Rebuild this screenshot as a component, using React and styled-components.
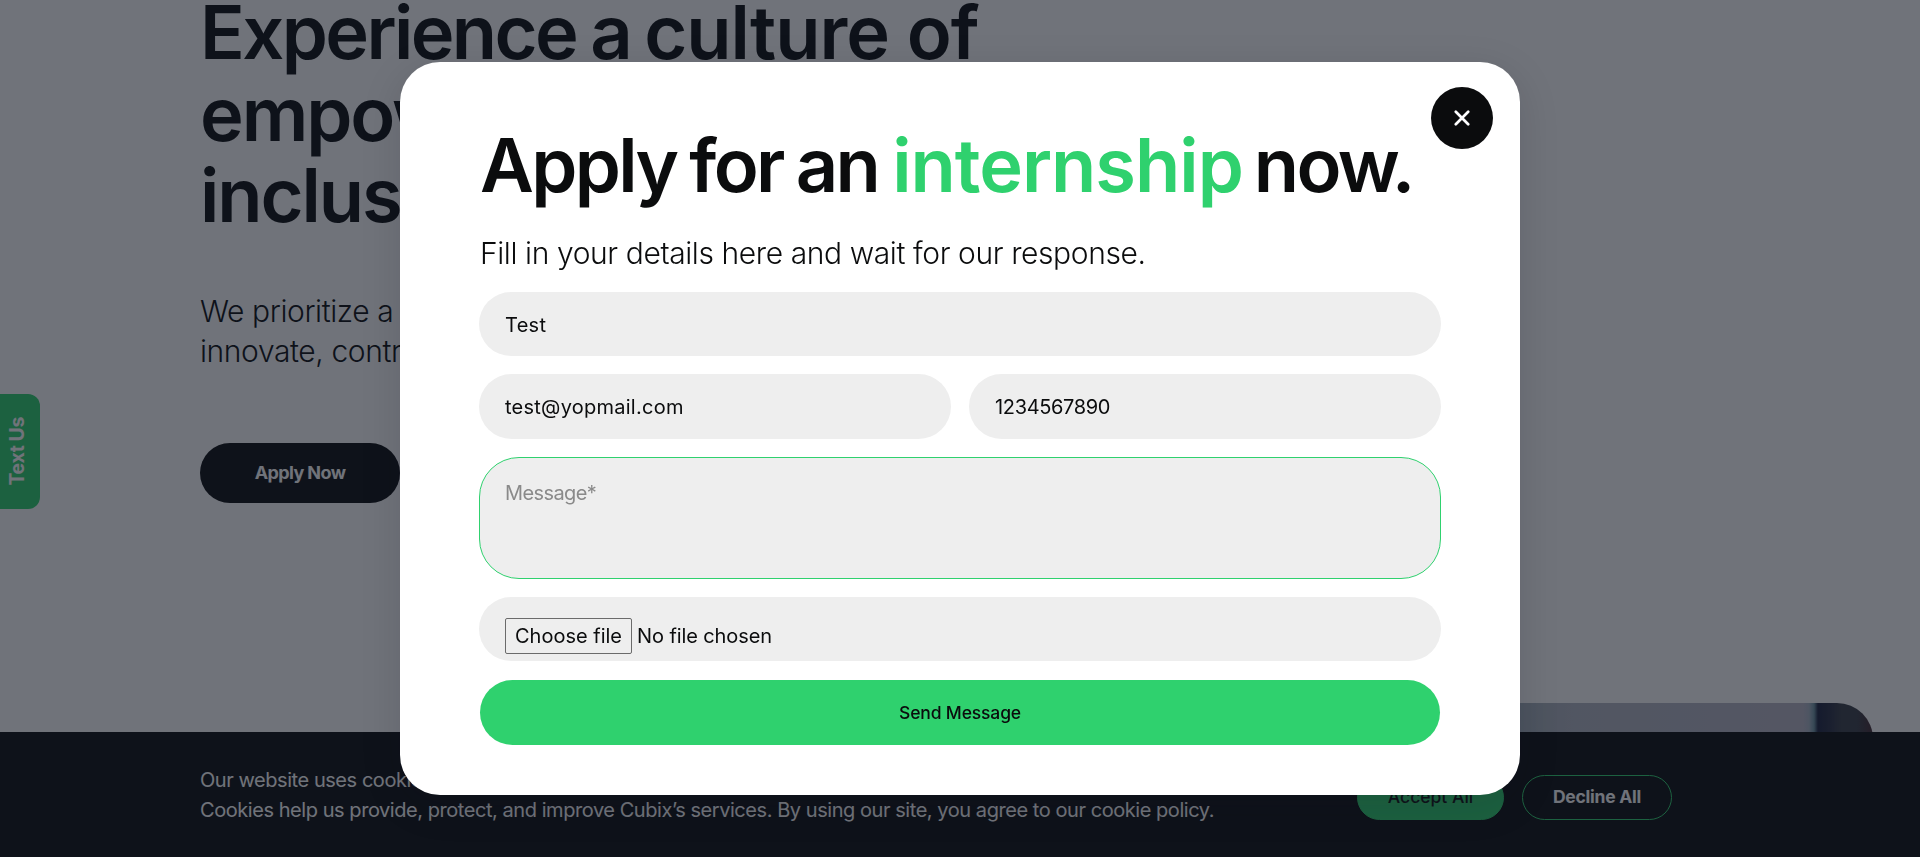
import React from "react";
import styled, { createGlobalStyle } from "styled-components";

const Global = createGlobalStyle`
  * { box-sizing: border-box; }
  body { margin: 0; background: #fff; font-family: Inter, "Liberation Sans", sans-serif; overflow: hidden; }
  h1, h2, p { margin: 0; font-weight: inherit; }
`;

const Text = styled.span`
  letter-spacing: ${(p) => p.$ls || 0}px;
  word-spacing: ${(p) => (p.$ws === undefined ? "inherit" : `${p.$ws}px`)};
`;

const Page = styled.div`
  height: 857px;
  display: flex;
  flex-direction: column;
  overflow: hidden;
  white-space: nowrap;
`;

const Hero = styled.main`
  height: 732px;
  flex: none;
  display: flex;
  flex-direction: column;
  align-items: flex-start;
  padding-left: 200px;
  overflow: hidden;
`;

const HeroTitle = styled.h1`
  flex: none;
  margin-top: -8px;
  font-size: 74px;
  font-weight: 600;
  line-height: 81.5px;
  color: #0c0e10;
`;

const HeroText = styled.p`
  flex: none;
  margin-top: 54px;
  font-size: 30px;
  font-weight: 300;
  line-height: 40px;
  color: #0c0e10;
`;

const ApplyButton = styled.div`
  flex: none;
  margin-top: 72px;
  width: 200px;
  height: 60px;
  border-radius: 30px;
  background: #0c0e10;
  color: #fff;
  display: flex;
  align-items: center;
  justify-content: center;
  font-size: 18px;
  font-weight: 700;
`;

const Photo = styled.div`
  align-self: flex-end;
  flex: none;
  margin: 200px 47px 0 0;
  width: 700px;
  height: 400px;
  border-radius: 36px;
  background: linear-gradient(90deg, #a4b0ba 340px, #b2b6c2 400px, #b6b6c6 540px, #b9b6c6 630px, #a9b4c4 636px, #6e93a2 641px, #1c2340 645px, #2b3045 658px, #3a3f49 668px, #3a3f49 684px, #432c34 698px);
`;

const CookieBar = styled.footer`
  height: 125px;
  flex: none;
  background: #0c0e10;
  color: #fff;
  display: flex;
  justify-content: space-between;
  align-items: flex-start;
  padding: 33px 248px 0 200px;
`;

const CookieText = styled.p`
  font-size: 20px;
  font-weight: 400;
  line-height: 30px;
`;

const Choices = styled.div`
  display: flex;
  gap: 18px;
  padding-top: 10px;
`;

const Choice = styled.div`
  width: ${(p) => (p.$solid ? 147 : 150)}px;
  height: 45px;
  padding-bottom: 3px;
  border-radius: 23px;
  border: 1px solid #2fd16e;
  background: ${(p) => (p.$solid ? "#2fd16e" : "transparent")};
  color: ${(p) => (p.$solid ? "#0c0e10" : "#fff")};
  font-size: 17.5px;
  font-weight: ${(p) => (p.$solid ? 500 : 700)};
  display: flex;
  align-items: center;
  justify-content: center;
`;

const SideTab = styled.div`
  position: fixed;
  left: 0;
  top: 394px;
  width: 40px;
  height: 115px;
  border-radius: 0 12px 12px 0;
  background: #2fd16e;
  color: #fff;
  display: flex;
  align-items: center;
  justify-content: center;
  writing-mode: vertical-rl;
  font-size: 19.5px;
  font-weight: 700;
  letter-spacing: -0.4px;
  white-space: nowrap;
  padding-right: 6px;
`;

const SideLabel = styled.span`
  transform: rotate(180deg);
`;

const Overlay = styled.div`
  position: fixed;
  inset: 0;
  background: rgba(16, 22, 34, 0.6);
  display: flex;
  justify-content: center;
  align-items: flex-start;
  padding-top: 62px;
  white-space: nowrap;
`;

const Modal = styled.section`
  position: relative;
  width: 1120px;
  height: 733px;
  border-radius: 40px;
  background: #fff;
  padding: 62px 79px 0;
  box-shadow: 0 10px 40px rgba(12, 14, 20, 0.13);
  color: #0b0c0d;
`;

const Close = styled.div`
  position: absolute;
  top: 25px;
  right: 27px;
  width: 62px;
  height: 62px;
  border-radius: 50%;
  background: #0b0c0d;
  display: flex;
  align-items: center;
  justify-content: center;
`;

const Title = styled.h2`
  padding-left: 1px;
  font-size: 74px;
  font-weight: 600;
  line-height: 82px;
  word-spacing: -3px;
`;

const Green = styled.span`
  color: #2fd16e;
  letter-spacing: -1px;
  margin: 0 -2px 0 1px;
`;

const Subtitle = styled.p`
  margin-top: 27px;
  margin-bottom: 18px;
  padding-left: 1px;
  font-size: 30px;
  font-weight: 300;
  line-height: 41px;
`;

const Fields = styled.div`
  display: flex;
  flex-direction: column;
  gap: 18px;
`;

const Row = styled.div`
  display: grid;
  grid-template-columns: 1fr 1fr;
  gap: 18px;
`;

const Field = styled.div`
  height: ${(p) => p.$h || 64}px;
  border-radius: 36px;
  background: #eee;
  padding: 1px 26px 0;
  display: flex;
  align-items: center;
  font-size: 20px;
`;

const Message = styled(Field)`
  border: 1px solid #2fd16e;
  border-radius: 40px;
  align-items: flex-start;
  padding: 23px 25px;
  line-height: 24px;
  color: #8a8a8a;
  font-weight: 400;
`;

const FileField = styled(Field)`
  align-items: flex-start;
  padding-top: 21px;
`;

const FileButton = styled.div`
  width: 127px;
  height: 36px;
  border: 1px solid #6b6b6b;
  border-radius: 2px;
  margin-right: 5px;
  display: flex;
  align-items: center;
  justify-content: center;
`;

const FileName = styled.div`
  line-height: 36px;
`;

const Send = styled.div`
  margin: 1px 1px 0;
  height: 65px;
  border-radius: 36px;
  background: #2fd16e;
  display: flex;
  align-items: center;
  justify-content: center;
  font-size: 17.5px;
  font-weight: 500;
`;

export default function App() {
  return (
    <>
      <Global />
      <Page>
        <Hero>
          <HeroTitle>
            <Text $ls={-2.6} $ws={-2}>Experience a </Text>
            <Text $ls={-1}>culture of</Text>
            <br />
            <Text $ls={-2.1}>empower<br />inclusiv</Text>
          </HeroTitle>
          <HeroText>
            <Text $ls={-0.4}>We prioritize a culture<br />innovate, contribute</Text>
          </HeroText>
          <ApplyButton><Text $ls={-0.6}>Apply Now</Text></ApplyButton>
          <Photo />
        </Hero>
        <CookieBar>
          <CookieText>
            <Text $ls={-0.445}>Our website uses cookies.<br />Cookies help us provide, protect, and improve Cubix’s services. By using our site, you agree to our cookie policy.</Text>
          </CookieText>
          <Choices>
            <Choice $solid><Text>Accept All</Text></Choice>
            <Choice><Text $ls={-0.25}>Decline All</Text></Choice>
          </Choices>
        </CookieBar>
      </Page>
      <SideTab><SideLabel>Text Us</SideLabel></SideTab>
      <Overlay>
        <Modal>
          <Close>
            <svg width="16" height="16" viewBox="0 0 16 16" stroke="#fff" strokeWidth="2.7" strokeLinecap="round">
              <path d="M1.8 1.8 14.2 14.2M14.2 1.8 1.8 14.2" />
            </svg>
          </Close>
          <Title>
            <Text $ls={-2.67}>Apply for an <Green>internship</Green> now.</Text>
          </Title>
          <Subtitle><Text $ls={-0.4}>Fill in your details here and wait for our response.</Text></Subtitle>
          <Fields>
            <Field><Text $ls={0.3}>Test</Text></Field>
            <Row>
              <Field $h={65}><Text $ls={0.25}>test@yopmail.com</Text></Field>
              <Field $h={65}><Text $ls={-0.35}>1234567890</Text></Field>
            </Row>
            <Message $h={122}><Text $ls={-0.6}>Message*</Text></Message>
            <FileField>
              <FileButton><Text>Choose file</Text></FileButton>
              <FileName><Text $ls={-0.1}>No file chosen</Text></FileName>
            </FileField>
            <Send><Text $ls={-0.15}>Send Message</Text></Send>
          </Fields>
        </Modal>
      </Overlay>
    </>
  );
}
